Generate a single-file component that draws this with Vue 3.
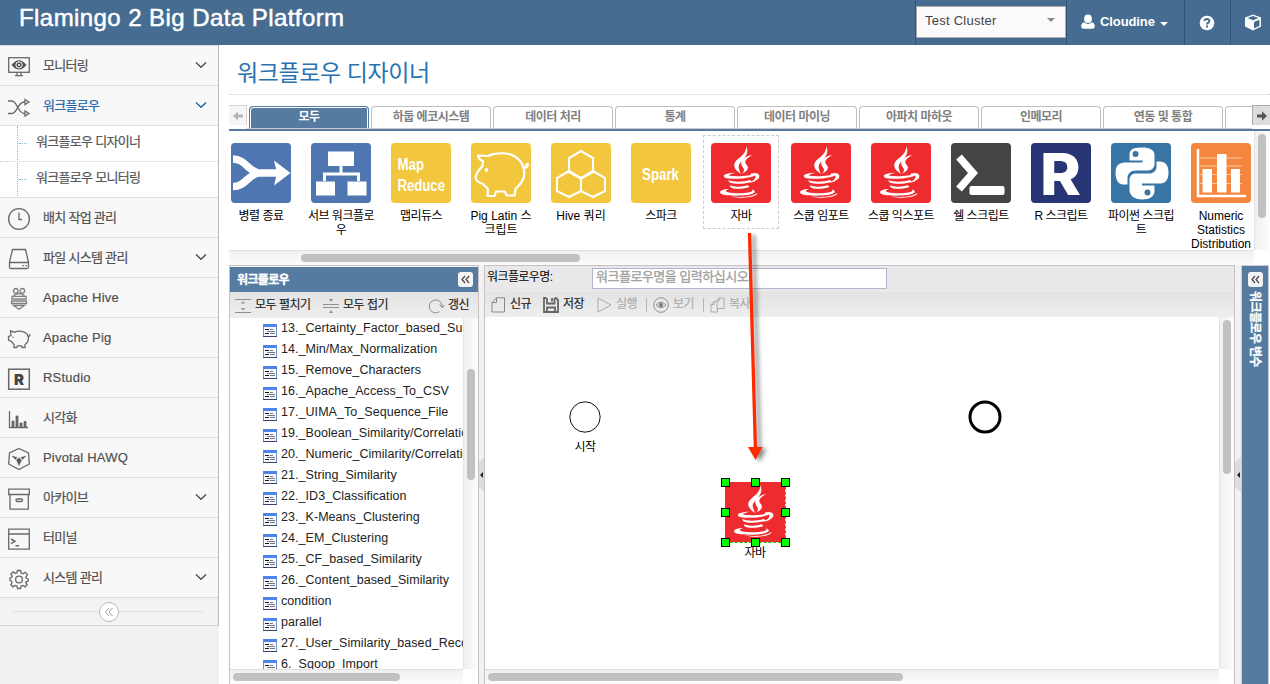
<script setup>
import { h } from 'vue'

const menu = [
  { t: '모니터링', i: 'monitor', more: true },
  { t: '워크플로우', i: 'shuffle', more: true, on: true, sub: ['워크플로우 디자이너', '워크플로우 모니터링'] },
  { t: '배치 작업 관리', i: 'clock' },
  { t: '파일 시스템 관리', i: 'drive', more: true },
  { t: 'Apache Hive', i: 'hive', en: true },
  { t: 'Apache Pig', i: 'pig', en: true },
  { t: 'RStudio', i: 'r', en: true },
  { t: '시각화', i: 'chart' },
  { t: 'Pivotal HAWQ', i: 'hawq', en: true },
  { t: '아카이브', i: 'archive', more: true },
  { t: '터미널', i: 'terminal' },
  { t: '시스템 관리', i: 'gear', more: true },
]

const tabs = ['모두', '하둡 에코시스템', '데이터 처리', '통계', '데이터 마이닝', '아파치 마하웃', '인메모리', '연동 및 통합', '']

const modules = [
  { i: 'merge', lines: ['병렬 종료'] },
  { i: 'subflow', lines: ['서브 워크플로', '우'] },
  { i: 'mapreduce', lines: ['맵리듀스'] },
  { i: 'pig', lines: ['Pig Latin 스', '크립트'], en: true },
  { i: 'hive', lines: ['Hive 쿼리'], en: true },
  { i: 'spark', lines: ['스파크'] },
  { i: 'java', lines: ['자바'], hover: true },
  { i: 'java', lines: ['스쿱 임포트'] },
  { i: 'java', lines: ['스쿱 익스포트'] },
  { i: 'shell', lines: ['쉘 스크립트'] },
  { i: 'r', lines: ['R 스크립트'] },
  { i: 'python', lines: ['파이썬 스크립', '트'] },
  { i: 'stats', lines: ['Numeric', 'Statistics', 'Distribution'], en: true },
]

const tree = [
  '13._Certainty_Factor_based_Summation', '14._Min/Max_Normalization', '15._Remove_Characters',
  '16._Apache_Access_To_CSV', '17._UIMA_To_Sequence_File', '19._Boolean_Similarity/Correlation',
  '20._Numeric_Cimilarity/Correlation', '21._String_Similarity', '22._ID3_Classification',
  '23._K-Means_Clustering', '24._EM_Clustering', '25._CF_based_Similarity', '26._Content_based_Similarity',
  'condition', 'parallel', '27._User_Similarity_based_Recommendation', '6._Sqoop_Import',
]

const handles = ['tl', 'tc', 'tr', 'ml', 'mr', 'bl', 'bc', 'br']

const JavaGlyph = () => h('g', { fill: '#fff' }, [
  'M35 3C36 8 32 12 27 16C22 20 21 25 30 31C28 26 26 23 30 19C36 13 38 8 35 3Z',
  'M41 12C34 13 28 18 31 23C33 26 34 27 31.500 30.500C38 27 38 24 35 21C33 18 35 16 41 12Z',
  'M13 33.500C12 31 19 30 24 29.800C20 31 17 32 18 32.600C22 33.800 35 33.300 42.500 31.500L43.500 32.800C36 36.500 13 37 13 33.500Z',
  'M40 30.500C46 28.500 51 32 47 36C45 38 42 39 38.500 40C44 36.500 46 34 43.500 32.500C42.500 32 41 32.300 39.500 32.500Z',
  'M17.500 37C22 39.500 33 39 39 37L41 38.700C34 41.500 16.500 42 17.500 37Z',
  'M19 42.200C24 44.300 32 44 36.500 42.300L38.500 44C32 46.800 17.500 46.500 19 42.200Z',
  'M18 46C15 47 13.500 48.300 17 49.200C24 51 37 50.500 41 48.200C42 47.500 41 46.500 40.500 46.200C45 47.500 45 49.800 40 51.200C31 53.500 9.500 53.200 9 49.500C9 47.500 13 46 18 46Z',
  'M19 53.200C30 54.800 42 54 46.500 49.800C46 55.500 26 55.600 19 53.200Z',
].map((d) => h('path', { d })))
</script>

<template>
  <div class="page">
    <header class="top">
      <h1>Flamingo 2 Big Data Platform</h1>
      <div class="top-right">
        <div class="cell cluster"><div class="select"><span>Test Cluster</span><i class="caret grey"></i></div></div>
        <div class="cell user">
          <svg width="16" height="16" viewBox="0 0 16 16" fill="#fff"><ellipse cx="8" cy="4.800" rx="3.900" ry="4.300" /><path d="M1.200 12.500C1.200 9.500 3 8.600 4.300 8.300Q8 11.500 11.700 8.300C13 8.600 14.800 9.500 14.800 12.500Q14.800 14.800 12.500 14.800H3.500Q1.200 14.800 1.200 12.500Z" /></svg>
          <b>Cloudine</b><i class="caret"></i>
        </div>
        <div class="cell help"><svg width="16" height="16" viewBox="0 0 16 16"><circle cx="8" cy="8" r="7.300" fill="#fff" /><path d="M5.600 6.200Q5.800 4.100 8 4.100T10.400 6.100Q10.400 7.300 8.900 8Q8 8.400 8 9.400" fill="none" stroke="#476c91" stroke-width="2" /><rect x="7" y="10.500" width="2" height="2" fill="#476c91" /></svg></div>
        <div class="cell cube"><svg width="18" height="17" viewBox="0 0 18 17"><path d="M9 .5L17 3.500V12.500L9 16.500L1 12.500V3.500Z" fill="#fff" /><path d="M3.500 4L9 2L14.500 4L9 6.300Z" fill="#476c91" /><path d="M10 8L15.500 5.800V11.800L10 14.500Z" fill="#476c91" /></svg></div>
      </div>
    </header>

    <div class="body">
      <aside>
        <nav>
          <template v-for="m in menu" :key="m.t">
            <div class="item" :class="{ on: m.on }">
              <svg class="mi" width="24" height="24" viewBox="0 0 24 24" fill="none" stroke="#686868" stroke-width="1.300">
                <template v-if="m.i === 'monitor'"><rect x="1.700" y="2.700" width="20.600" height="14.600" /><path d="M4.500 10Q12 .5 19.500 10Q12 19 4.500 10Z" fill="#555" stroke="none" /><circle cx="12" cy="9.900" r="3.100" fill="#555" stroke="#fff" stroke-width="1" /><circle cx="12" cy="9.900" r="1" fill="#fff" stroke="none" /><path d="M10 17.500V20M14 17.500V20M8 20.700H16" /></template>
                <template v-else-if="m.i === 'shuffle'"><path d="M1 6H5C10 6 11 18.500 17 18.500H18M1 18.500H5C10 18.500 11 7 17 7H18" /><path d="M18 4.500L22 7L18 9.500ZM18 16L22 18.500L18 21Z" /></template>
                <template v-else-if="m.i === 'clock'"><circle cx="12" cy="12" r="10.400" /><path d="M12 5.500V12.500H15" /></template>
                <template v-else-if="m.i === 'drive'"><path d="M5.500 2.500H18.500L21.500 15V20Q21.500 21.500 20 21.500H4Q2.500 21.500 2.500 20V15ZM2.500 15.500H21.500" /><path d="M15.500 18.700H17M18.500 18.700H20" /></template>
                <template v-else-if="m.i === 'hive'"><g stroke="#808080"><circle cx="8.700" cy="3.800" r="2.300" /><circle cx="15.300" cy="3.800" r="2.300" /><path d="M6.500 8.500Q12 4.500 17.500 8.500M5 9.300H19V12H5ZM4.500 14H19.500V16.500H4.500ZM6.500 18.500L12 22.300L17.500 18.500Z" /></g></template>
                <template v-else-if="m.i === 'pig'"><path d="M3.500 3.800L7.500 5.200C12 3.300 20.500 3.500 21.500 11C21.500 15 19.500 16.500 18 17.500V20.500H15L14.500 18.800H10.500L9.500 20.500H7V17.500L4.500 14.500L1.500 13V9.500L4 8.500ZM21 9.500Q23.500 9.500 22.500 7" /><path d="M6 9.500V10.700" /></template>
                <template v-else-if="m.i === 'r'"><rect x="1.700" y="2.200" width="20.600" height="20" stroke-width="1.500" /><text x="12" y="17.500" text-anchor="middle" class="ricon">R</text></template>
                <template v-else-if="m.i === 'chart'"><path d="M2.500 4V20.500H21" /><path d="M5 20V14H7V20ZM9 20V9H11V20ZM13 20V16H15V20ZM17 20V14.500H19V20Z" fill="#666" stroke-width=".8" /></template>
                <template v-else-if="m.i === 'hawq'"><path d="M12 1.500L21.500 6L22.300 17L12 22.500L1.700 17L2.500 6Z" /><path d="M5 9L10 10.500L8.500 12.500ZM19 9L14 10.500L15.500 12.500ZM9.500 13L12 10.800L14.500 13L12 18.500Z" fill="#555" stroke-width=".5" /></template>
                <template v-else-if="m.i === 'archive'"><path d="M1.700 2.200H22.300V7.500H1.700ZM3 8V22.200H21.300V8" /><rect x="9" y="12" width="6.500" height="2.500" rx="1.200" /></template>
                <template v-else-if="m.i === 'terminal'"><path d="M1.700 2.200H22.300V22.200H1.700ZM1.700 7H22.300" /><path d="M4 12L8 14.300L4 16.700M8.500 18.800H12" stroke-width="1.500" /></template>
                <template v-else><g transform="translate(0.500 0)"><circle cx="11.500" cy="12.500" r="3.400" /><path d="M9.900 3.500H13.100L13.600 6.100L15.400 6.800L17.600 5.300L19.900 7.600L18.400 9.800L19.100 11.500L20.700 12V14L18.700 14.800L18.200 15.500L19.700 17.600L17.500 19.800L15.300 18.400L13.600 19.100L13 21.500H10L9.400 19.100L7.700 18.400L5.500 19.800L3.300 17.600L4.600 15.500L3.900 14L2.500 13.500V11L4.200 10.300L4.800 9.200L3.300 7L5.500 4.900L7.600 6.300L9.400 5.900Z" /></g></template>
              </svg>
              <span :class="{ en: m.en }">{{ m.t }}</span>
              <svg v-if="m.more" class="chev" width="12" height="8" viewBox="0 0 12 8" fill="none" stroke="currentColor" stroke-width="1.500"><path d="M1 1.500L6 6.200L11 1.500" /></svg>
            </div>
            <div v-if="m.sub" class="subs"><div v-for="s in m.sub" :key="s" class="sub">{{ s }}</div></div>
          </template>
          <div class="fold"><span><svg width="10" height="10" viewBox="0 0 10 10" fill="none" stroke="#999"><path d="M5 1L1.500 5L5 9M8.500 1L5 5L8.500 9" /></svg></span></div>
        </nav>
      </aside>

      <main>
        <h2>워크플로우 디자이너</h2>
        <div class="tabs">
          <div class="scroller"><svg width="10" height="10" viewBox="0 0 10 10"><path d="M0 5L5 .5V3.500H10V6.500H5V9.500Z" fill="#b5b5b5" /></svg></div>
          <div class="tabstrip"><div v-for="(t, n) in tabs" :key="n" class="tab" :class="{ active: n === 0 }"><span>{{ t }}</span></div></div>
          <div class="scroller next"><svg width="10" height="10" viewBox="0 0 10 10"><path d="M10 5L5 .3V3.400H0V6.600H5V9.700Z" fill="#555" /></svg></div>
        </div>

        <section class="palette">
          <div class="modules">
            <div v-for="(m, n) in modules" :key="n" class="module" :class="{ hover: m.hover }">
              <svg class="tile" :class="m.i" width="60" height="60" viewBox="0 0 60 60">
                <g v-if="m.i === 'merge'"><path d="M2 16C14 16 16 27 27 30H46M2 43.500C14 43.500 16 33 27 30" fill="none" stroke="#fff" stroke-width="7.500" /><path d="M43 17.500L59.500 30L43 42.500L46 30Z" fill="#fff" /></g>
                <g v-else-if="m.i === 'subflow'"><path d="M30 22V31M13.500 38V31H47.500V38" fill="none" stroke="#fff" stroke-width="3" /><path d="M17 8.500H43V23H17ZM5 38.500H24V52.500H5ZM36.500 38.500H55.500V52.500H36.500Z" fill="#fff" /></g>
                <g v-else-if="m.i === 'mapreduce'" class="word"><text x="6.500" y="27" textLength="26.500" lengthAdjust="spacingAndGlyphs">Map</text><text x="6.500" y="47.500" textLength="47.500" lengthAdjust="spacingAndGlyphs">Reduce</text></g>
                <g v-else-if="m.i === 'spark'" class="word"><text x="11" y="37" textLength="37" lengthAdjust="spacingAndGlyphs">Spark</text></g>
                <g v-else-if="m.i === 'pig'" fill="none" stroke="#fff" stroke-width="2.200" stroke-linejoin="round"><path d="M7 12.500L17 13C25 9 37 9.500 44 13.500C51 18 54 25 53 33C52 40 47 43 44.500 46L43.500 52.500H35.500L34 48.500H25L23.500 53H16.500L17 46L12 41Q5 39 4.500 34L6.500 29L11.500 23L12 18Q8 17 7 12.500ZM52.500 25Q58 25 56 20M54 22L58 21" /><circle cx="15.500" cy="27" r=".8" fill="#fff" /></g>
                <g v-else-if="m.i === 'hive'" fill="none" stroke="#fff" stroke-width="2.100"><path d="M30 8L42 15V29L30 35.500L18 29V15ZM18 28L30 35V48L18 54L6 48V35ZM42 28L54 35V48L42 54L30 48V35Z" /></g>
                <JavaGlyph v-else-if="m.i === 'java'" />
                <g v-else-if="m.i === 'shell'"><path d="M8 14L22 30L8 46" stroke="#fff" stroke-width="7.500" fill="none" /><rect x="18.500" y="43" width="35" height="9" rx="2" fill="#fff" /></g>
                <text v-else-if="m.i === 'r'" class="bigr" x="9" y="51.500" textLength="41" lengthAdjust="spacingAndGlyphs">R</text>
                <g v-else-if="m.i === 'python'"><path d="M30.500 4.500C20 4.500 18.500 8 18.500 12V17.500H31.500V19.500H13C6 20 4.500 25 4.500 30C4.500 36 7 41.500 12 41.500H16.500V35.500C16.500 31 19.500 27.500 25 27.500H37C41 27.500 43.500 24.500 43.500 21V12C43.500 7 39 4.500 30.500 4.500Z" fill="#fff" /><path d="M45.500 18.500V24C45.500 28 42 30.500 38 30.500H25C21 30.500 18.500 33 18.500 37V47C18.500 52 23 56.500 31 56.500C39 56.500 43.500 53 43.500 48V42.500H31V40.500H49C55 40.500 57.500 36 57.500 29.500C57.500 22 54 18.500 49 18.500Z" fill="#fff" /><circle cx="24.500" cy="11" r="3" fill="#3874a4" /><circle cx="36.500" cy="49.500" r="3" fill="#3874a4" /></g>
                <g v-else><path d="M9 15H51M9 23H51M9 31.500H51M9 40.500H51" stroke="#fbc7a3" /><path d="M11.500 26H21V49.500H11.500ZM26 11H35.500V49.500H26ZM40 26H49V49.500H40Z" fill="#fff" /><path d="M7 7V53H54" stroke="#fff" stroke-width="2.500" fill="none" stroke-linecap="round" /></g>
              </svg>
              <div class="caption" :class="{ en: m.en }"><div v-for="l in m.lines" :key="l">{{ l }}</div></div>
            </div>
          </div>
          <div class="vbar"><i></i></div>
          <div class="hbar"><i></i></div>
        </section>

        <div class="panels">
          <section class="left panel">
            <div class="ptitle"><b>워크플로우</b><span class="sq"><svg width="9" height="9" viewBox="0 0 9 9"><path d="M4 1L1 4.500L4 8M8 1L5 4.500L8 8" /></svg></span></div>
            <div class="tools">
              <svg width="16" height="16" viewBox="0 0 16 16" stroke="#909090" fill="#909090"><path d="M0 1.500H16M0 14.500H16" /><path d="M6 5.500L8 3L10 5.500ZM6 10L8 12.500L10 10Z" stroke="none" /></svg>
              <span class="t1">모두 펼치기</span>
              <svg width="16" height="16" viewBox="0 0 16 16" stroke="#909090" fill="#909090"><path d="M0 6.500H16M0 9.500H16" /><path d="M6 1H10L8 4ZM6 15L8 12L10 15Z" stroke="none" /></svg>
              <span class="t2">모두 접기</span>
              <svg width="17" height="16" viewBox="0 0 17 16" fill="none" stroke="#909090"><path d="M11.500 13.700A6.500 6.500 0 1 1 14.200 9" /><path d="M11.800 6.500L14.200 10L16.500 7" /></svg>
              <span>갱신</span>
            </div>
            <div class="tree">
              <div class="rows">
                <div v-for="t in tree" :key="t" class="row">
                  <svg width="14" height="13" viewBox="0 0 14 13"><rect x=".5" y=".5" width="13" height="12" fill="#f6f9ff" stroke="#7292cc" /><path d="M0 0H14V3H0Z" fill="#4f83ec" /><path d="M0 12.500H14" stroke="#35466a" /><path d="M2 5.500H6M2 9.500H6" stroke="#111" /><path d="M4 7.500H12M7 5.500H10M7 9.500H12" stroke="#777" /></svg>
                  <span>{{ t }}</span>
                </div>
              </div>
              <div class="vbar"><i></i></div>
            </div>
            <div class="hbar"><i></i></div>
          </section>

          <div class="split"><span><i></i></span></div>

          <section class="center panel">
            <div class="form"><label>워크플로우명:</label><div class="input">워크플로우명을 입력하십시오.</div></div>
            <div class="tools">
              <svg width="15" height="16" viewBox="0 0 15 16" fill="none" stroke="#888"><path d="M5.500 .8H13.500V15H1V5.500ZM5.500 .8V5.500H1" /></svg><span class="b1">신규</span>
              <svg width="16" height="16" viewBox="0 0 16 16" fill="none" stroke="#666" stroke-width="1.800"><path d="M3.500 1H1V15H15V3L13 1H12M4 1V6.500H11.500V1M4 15V10.500H12V15" /><path d="M9 1V4.500" /></svg><span class="b2">저장</span>
              <svg width="15" height="16" viewBox="0 0 15 16" fill="none" stroke="#aaa"><path d="M1 1L14 8L1 15Z" /></svg><span class="b3 off">실행</span>
              <i class="sep"></i>
              <svg width="16" height="16" viewBox="0 0 16 16" fill="none" stroke="#909090"><circle cx="8" cy="8" r="7.300" /><path d="M3 8Q8 2.500 13 8Q8 13.500 3 8Z" /><circle cx="8" cy="8" r="1.900" fill="#777" /></svg><span class="b4 off">보기</span>
              <i class="sep"></i>
              <svg width="15" height="16" viewBox="0 0 15 16" fill="none" stroke="#aaa"><path d="M9 1H14V11.500H7V4L9 1ZM9 1V4H7M6 4.500H4L1 7.500V15H7.500V12M4 4.500V7.500H1" /></svg><span class="b5 off">복사</span>
            </div>
            <div class="work">
              <div class="canvas">
                <svg class="start" width="32" height="32" viewBox="0 0 32 32"><circle cx="16" cy="16" r="15.200" fill="#fff" stroke="#111" /></svg>
                <div class="node-label start-label">시작</div>
                <svg class="end" width="34" height="34" viewBox="0 0 34 34"><circle cx="17" cy="17" r="15" fill="#fff" stroke="#000" stroke-width="3" /></svg>
                <div class="node">
                  <svg width="60" height="60" viewBox="0 0 60 60"><rect width="60" height="60" fill="#ee2b2e" /><JavaGlyph /></svg>
                  <i v-for="k in handles" :key="k" class="handle" :class="k"></i>
                </div>
                <div class="node-label java-label">자바</div>
              </div>
              <div class="vbar"><i></i></div>
            </div>
            <div class="hbar"><i></i></div>
          </section>

          <div class="split second"><span><i></i></span></div>

          <section class="variables"><span class="sq"><svg width="9" height="9" viewBox="0 0 9 9"><path d="M4 1L1 4.500L4 8M8 1L5 4.500L8 8" /></svg></span><b>워크플로우 변수</b></section>
        </div>
      </main>
    </div>

    <svg class="arrow" width="34" height="240" viewBox="0 0 34 240">
      <path d="M11.500 3L17.500 222" stroke="#ff2a00" stroke-width="3.300" />
      <path d="M10 217H24.500L17.500 230Z" fill="#ff2a00" />
    </svg>
  </div>
</template>

<style>
html, body { margin: 0; overflow: hidden; }
</style>

<style scoped>
* { box-sizing: border-box; }
.page { position: relative; width: 1270px; height: 684px; overflow: hidden; background: #fff; font-family: "Liberation Sans", "Noto Sans CJK KR", sans-serif; font-size: 12px; color: #111; }
svg { display: block; flex: none; }
i { display: block; flex: none; }
.top { height: 45px; background: #476c91; display: flex; justify-content: space-between; color: #fff; }
h1 { margin: 0; padding-left: 19px; font-size: 24px; font-weight: 400; line-height: 35px; letter-spacing: .43px; -webkit-text-stroke: .5px #fff; }
.top-right { display: flex; }
.cell { height: 45px; border-left: 1px solid #34536f; display: flex; align-items: center; }
.cluster { width: 151px; align-items: flex-start; padding-top: 6px; }
.select { width: 150px; height: 32px; background: #fbfbfb; border: 1px solid #aaa; display: flex; justify-content: space-between; padding: 0 10px 0 8px; color: #444; font-size: 13px; line-height: 27px; letter-spacing: .25px; }
.caret { border: 4px solid transparent; border-top-color: #fff; border-bottom: 0; margin-top: 2px; }
.caret.grey { border-width: 4px 4.500px 0; border-top-color: #888; margin-top: 11px; }
.user { width: 118px; padding-left: 13px; font-size: 13px; }
.user svg { margin-top: -1px; }
.user b { margin: -3px 5px 0 4px; letter-spacing: -.1px; }
.help { width: 46px; padding-left: 14px; }
.cube { width: 40px; padding-left: 13px; }
.body { display: flex; height: 639px; }
aside { width: 219px; background: #f1f1f1; flex: none; }
nav { border-right: 1px solid #bbb; }
.item { height: 40px; border-bottom: 1px solid #dedede; background: #f8f8f8; display: flex; align-items: center; padding-left: 7px; color: #505050; font-size: 13px; }
.item:first-child { height: 41px; border-top: 1px solid #ddd; }
.mi { margin: 2px 12px 0 0; }
.item span { letter-spacing: -.7px; line-height: 20px; margin-top: 1px; -webkit-text-stroke: .2px; }
.item span.en { letter-spacing: .2px; }
.item.on { color: #2464a8; }
.chev { margin: -1px 11px 0 auto; }
.ricon { font: 900 15px Inter, sans-serif; fill: #444; stroke: none; }
.subs { height: 72px; background: #fff; position: relative; }
.subs::before { content: ""; position: absolute; left: 17px; top: 0; bottom: 0; border-left: 1px dotted #8fb2cd; }
.sub { height: 36px; padding-left: 36px; line-height: 31px; color: #555; font-size: 13px; letter-spacing: -.7px; border-bottom: 1px dotted #d0d0d0; position: relative; -webkit-text-stroke: .2px; }
.sub::before { content: ""; position: absolute; left: 19px; top: 17px; width: 8px; border-top: 1px dotted #8fb2cd; }
.sub:last-child { border-bottom: 1px solid #dedede; }
.fold { height: 28px; background: #f3f3f3; border-bottom: 1px solid #d5d5d5; display: flex; align-items: center; padding: 0 15px 0 14px; }
.fold::before, .fold::after { content: ""; flex: 1; height: 1px; background: #dcdcdc; }
.fold span { width: 20px; height: 20px; border: 1px solid #bbb; border-radius: 50%; background: #fff; display: flex; align-items: center; justify-content: center; }
main { width: 1041px; margin-left: 10px; display: flex; flex-direction: column; }
h2 { margin: 0; height: 50px; border-bottom: 1px dotted #ccc; padding-left: 8px; font-size: 23px; font-weight: 400; line-height: 57px; color: #2872b4; letter-spacing: -.4px; }
.tabs { height: 36px; padding-top: 10px; display: flex; border-bottom: 2px solid #557ba0; }
.scroller { width: 18px; height: 20px; flex: none; border: solid #d5d5d5; border-width: 1px 1px 0 0; background: #f5f5f5; display: flex; align-items: center; justify-content: center; }
.scroller.next { background: #ddd; border-color: #aaa; border-width: 1px 0 0 1px; }
.tabstrip { flex: 1; min-width: 0; overflow: hidden; display: flex; gap: 2px; padding: 1px 0 0 2px; border-bottom: 1px solid #ccc; }
.tab { width: 120px; flex: none; height: 23px; border: 1px solid #bfbfbf; border-bottom: 0; border-radius: 4px 4px 0 0; text-align: center; font-weight: 700; color: #808080; line-height: 20px; letter-spacing: -.5px; background: #fff; }
.tab.active { background: #557ba0; border-color: #557ba0; color: #fff; box-shadow: inset 1px 1px 0 #fff, inset -1px 0 0 #fff; }
.palette { height: 134px; display: grid; grid-template: 119px 15px / 1025px 15px; }
.modules { display: flex; gap: 4px; overflow: hidden; padding-top: 4px; }
.module { width: 76px; height: 94px; flex: none; padding: 7px; border: 1px solid transparent; }
.module:first-child { margin-left: -6px; }
.module.hover { border: 1px dashed #ccc; }
.tile { border-radius: 4px; background: #ee2b2e; }
.tile.merge, .tile.subflow { background: #4f76b1; }
.tile.mapreduce, .tile.pig, .tile.hive, .tile.spark { background: #f2c63d; }
.tile.shell { background: #444; }
.tile.r { background: #283575; }
.tile.python { background: #3874a4; }
.tile.stats { background: #f5863f; }
.word { fill: #fff; font: 700 16px "Liberation Sans", sans-serif; }
.bigr { fill: #fff; font: 800 58px Inter, sans-serif; }
.caption { margin: 6px -8px 0; text-align: center; color: #000; line-height: 14px; letter-spacing: -.5px; white-space: nowrap; }
.caption.en { letter-spacing: 0; }
.vbar { background: linear-gradient(90deg, #f0f0f0, #fcfcfc); border-left: 1px solid #e4e4e4; padding: 3px 0 0 3px; width: 15px; }
.vbar i { width: 8px; height: 84px; border-radius: 4px; background: #c1c1c1; }
.hbar { background: linear-gradient(#f0f0f0, #fcfcfc); border-top: 1px solid #e0e0e0; padding: 3px 0 0 72px; }
.hbar i { height: 8px; width: 279px; border-radius: 4px; background: #c1c1c1; }
.panels { flex: 1; display: flex; min-height: 0; }
.panel { border: 1px solid #c9c0c4; border-bottom: 0; display: flex; flex-direction: column; }
.left { width: 250px; flex: none; }
.ptitle { height: 26px; border-top: 1px solid #f4f4f4; background: #557ba0; color: #fff; display: flex; justify-content: space-between; padding: 0 5px 0 7px; align-items: center; letter-spacing: -.65px; }
.ptitle b { margin-top: -2px; -webkit-text-stroke: .3px; }
.sq { width: 15px; height: 15px; border-radius: 3px; background: #f4f4f4; display: flex; align-items: center; justify-content: center; flex: none; }
.sq path { fill: none; stroke: #444; stroke-width: 1.200; }
.tools { height: 25px; background: linear-gradient(#e3e3e3, #eee); display: flex; align-items: center; color: #222; letter-spacing: -.5px; white-space: nowrap; }
.tools span { line-height: 18px; margin-top: -1px; -webkit-text-stroke: .15px; }
.tools svg { margin-top: 1px; }
.left .tools { padding-left: 5px; height: 26px; }
.t1 { margin-left: 4px; width: 68px; }
.t2 { margin-left: 4px; width: 85px; }
.left .tools span:last-child { margin-left: 3px; }
.tree { height: 351px; flex: none; display: flex; }
.rows { width: 233px; overflow: hidden; }
.row { height: 21px; display: flex; padding: 6px 0 0 33px; white-space: nowrap; }
.row span { margin: -6px 0 0 4px; font-size: 12.500px; line-height: 20px; letter-spacing: .05px; color: #222; }
.tree .vbar { padding-top: 51px; }
.tree .vbar i { height: 111px; }
.left .hbar, .center .hbar { flex: 1; padding-left: 3px; }
.left .hbar { margin-right: 15px; }
.left .hbar i { width: 167px; }
.split { width: 5px; flex: none; background: #f2f2f2; padding-top: 192px; }
.split span { display: flex; align-items: center; justify-content: center; height: 35px; background: #dcdcdc; clip-path: polygon(0 5px, 100% 0, 100% 100%, 0 30px); }
.split i { border: 3px solid transparent; border-right: 3px solid #222; border-left: 0; }
.center { width: 751px; flex: none; }
.form { height: 26px; background: #e9e9e9; display: flex; padding: 2px 0 0 2px; }
label { width: 105px; letter-spacing: -.6px; line-height: 18px; color: #000; }
.input { width: 295px; height: 21px; border: 1px solid #b2b5ce; background: #fff; color: #a0a0a0; font-size: 13px; line-height: 16px; padding-left: 3px; letter-spacing: -.5px; white-space: nowrap; -webkit-text-stroke: .3px; }
.center .tools { padding-left: 6px; }
.off { color: #aaa; }
.b1 { margin-left: 4px; width: 33px; }
.b2 { margin-left: 4px; width: 34px; }
.b3 { margin-left: 4px; width: 30px; }
.b4 { margin-left: 4px; width: 30px; }
.b5 { margin-left: 4px; }
.sep { width: 1px; height: 14px; background: #b5b5a8; margin-right: 6px; }
.center .work { height: 352px; flex: none; display: flex; }
.canvas { width: 734px; position: relative; background: #fff; }
.work .vbar i { height: 154px; }
.center .hbar i { width: 415px; }
.center .hbar { margin-right: 15px; }
.start { position: absolute; left: 84px; top: 84px; }
.end { position: absolute; left: 483px; top: 83px; }
.node { position: absolute; left: 240px; top: 165px; width: 61px; height: 61px; border: dashed #0c0; border-width: 0 1px 1px 0; }
.handle { position: absolute; width: 9px; height: 9px; background: #0f0; border: 1px solid #000; }
.tl, .tc, .tr { top: -4px; }
.ml, .mr { top: 26px; }
.bl, .bc, .br { top: 56px; }
.tl, .ml, .bl { left: -4px; }
.tc, .bc { left: 26px; }
.tr, .mr, .br { left: 56px; }
.node-label { position: absolute; width: 60px; text-align: center; line-height: 16px; color: #000; letter-spacing: -.6px; }
.start-label { left: 70px; top: 122px; }
.java-label { left: 240px; top: 228px; }
.second { width: 6px; }
.variables { width: 28px; border: 1px solid #ccd; border-bottom: 0; background: #557ba0; color: #fff; display: flex; flex-direction: column; align-items: center; padding-top: 6px; }
.variables b { writing-mode: vertical-rl; text-orientation: sideways; margin-top: 4px; letter-spacing: -.6px; line-height: 16px; -webkit-text-stroke: .3px; }
.arrow { position: absolute; left: 738px; top: 230px; filter: drop-shadow(4px 2px 2px rgba(0, 0, 0, .45)); }
</style>
